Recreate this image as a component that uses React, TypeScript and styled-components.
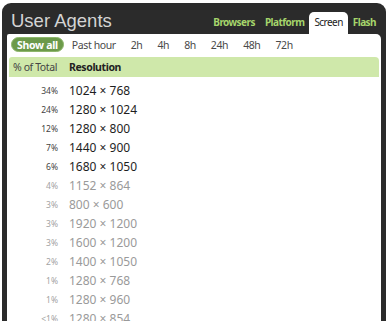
import React from "react";
import styled, { createGlobalStyle } from "styled-components";

const GlobalStyle = createGlobalStyle`
  html, body { margin: 0; background: #ffffff; }
  body { padding: 3px 0 0 2px; font-family: "Noto Sans", "DejaVu Sans", sans-serif; }
`;

const Panel = styled.div`
  width: 384px;
  height: 318px;
  background: #2b2b2b;
  border-radius: 9px 9px 0 0;
  padding: 0 5px;
  box-sizing: border-box;
  overflow: hidden;
  display: flex;
  flex-direction: column;
`;

const TopBar = styled.div`
  height: 31px;
  flex: none;
  display: flex;
  align-items: flex-end;
  justify-content: space-between;
`;

const Title = styled.h1`
  margin: 0 0 1.5px 4px;
  font-family: "Liberation Sans", Arial, sans-serif;
  font-weight: normal;
  font-size: 18.5px;
  line-height: 24px;
  color: #d4d4d4;
  letter-spacing: 0;
`;

const Tabs = styled.nav`
  display: flex;
  align-items: flex-end;
`;

const Tab = styled.span<{ $active?: boolean }>`
  height: 22px;
  padding: 0 5px 3px;
  display: flex;
  align-items: center;
  box-sizing: border-box;
  font-size: 10px;
  letter-spacing: -0.55px;
  font-weight: ${(p) => (p.$active ? 400 : 700)};
  color: ${(p) => (p.$active ? "#222" : "#a6d56b")};
  background: ${(p) => (p.$active ? "#ffffff" : "transparent")};
  border-radius: 5px 5px 0 0;
`;

const Content = styled.div`
  flex: 1;
  background: #ffffff;
  border-radius: 2px 5px 0 0;
  padding: 3px 2px 0;
`;

const FilterRow = styled.div`
  display: flex;
  align-items: center;
  height: 15px;
  padding-left: 2px;
  gap: 1px;
`;

const Filter = styled.span<{ $active?: boolean }>`
  height: 15px;
  line-height: 14px;
  box-sizing: border-box;
  padding: 0 ${(p) => (p.$active ? "5px" : "6px")};
  font-size: 10.5px;
  letter-spacing: ${(p) => (p.$active ? "-0.3px" : "-0.4px")};
  font-weight: ${(p) => (p.$active ? 700 : 400)};
  color: ${(p) => (p.$active ? "#ffffff" : "#4a4a4a")};
  background: ${(p) => (p.$active ? "#6c9a4a" : "transparent")};
  border: 1px solid ${(p) => (p.$active ? "#8db66b" : "transparent")};
  border-radius: 8px;
`;

const Table = styled.div`
  margin-top: 5px;
  display: grid;
  grid-template-columns: 49px 1fr;
  column-gap: 11px;
`;

const HeaderCell = styled.div<{ $bold?: boolean; $first?: boolean }>`
  height: 20px;
  line-height: 20px;
  background: #cfe8aa;
  font-size: 10.5px;
  letter-spacing: -0.4px;
  font-weight: ${(p) => (p.$bold ? 700 : 400)};
  color: ${(p) => (p.$bold ? "#222" : "#444")};
  padding-left: ${(p) => (p.$first ? "4px" : "0")};
  border-radius: ${(p) => (p.$first ? "3px 0 0 0" : "0 4px 0 0")};
  margin-right: ${(p) => (p.$first ? "-11px" : "0")};
  padding-right: ${(p) => (p.$first ? "11px" : "0")};
  margin-bottom: 4px;
`;

const Pct = styled.div<{ $dim?: boolean }>`
  height: 19px;
  line-height: 19px;
  text-align: right;
  font-size: 8.5px;
  color: ${(p) => (p.$dim ? "#a3a3a3" : "#444")};
`;

const Res = styled.div<{ $dim?: boolean }>`
  height: 19px;
  line-height: 19px;
  font-size: 12px;
  letter-spacing: 0;
  color: ${(p) => (p.$dim ? "#9a9a9a" : "#1e1e1e")};
`;

const rows: [string, string][] = [
  ["34%", "1024 × 768"],
  ["24%", "1280 × 1024"],
  ["12%", "1280 × 800"],
  ["7%", "1440 × 900"],
  ["6%", "1680 × 1050"],
  ["4%", "1152 × 864"],
  ["3%", "800 × 600"],
  ["3%", "1920 × 1200"],
  ["3%", "1600 × 1200"],
  ["2%", "1400 × 1050"],
  ["1%", "1280 × 768"],
  ["1%", "1280 × 960"],
  ["<1%", "1280 × 854"],
];

const filters = ["Show all", "Past hour", "2h", "4h", "8h", "24h", "48h", "72h"];
const tabs = ["Browsers", "Platform", "Screen", "Flash"];

export default function App() {
  return (
    <>
      <GlobalStyle />
      <Panel>
        <TopBar>
          <Title>User Agents</Title>
          <Tabs>
            {tabs.map((t) => (
              <Tab key={t} $active={t === "Screen"}>
                {t}
              </Tab>
            ))}
          </Tabs>
        </TopBar>
        <Content>
          <FilterRow>
            {filters.map((f, i) => (
              <Filter key={f} $active={i === 0}>
                {f}
              </Filter>
            ))}
          </FilterRow>
          <Table>
            <HeaderCell $first>% of Total</HeaderCell>
            <HeaderCell $bold>Resolution</HeaderCell>
            {rows.map(([p, r], i) => (
              <React.Fragment key={i}>
                <Pct $dim={i >= 5}>{p}</Pct>
                <Res $dim={i >= 5}>{r}</Res>
              </React.Fragment>
            ))}
          </Table>
        </Content>
      </Panel>
    </>
  );
}
